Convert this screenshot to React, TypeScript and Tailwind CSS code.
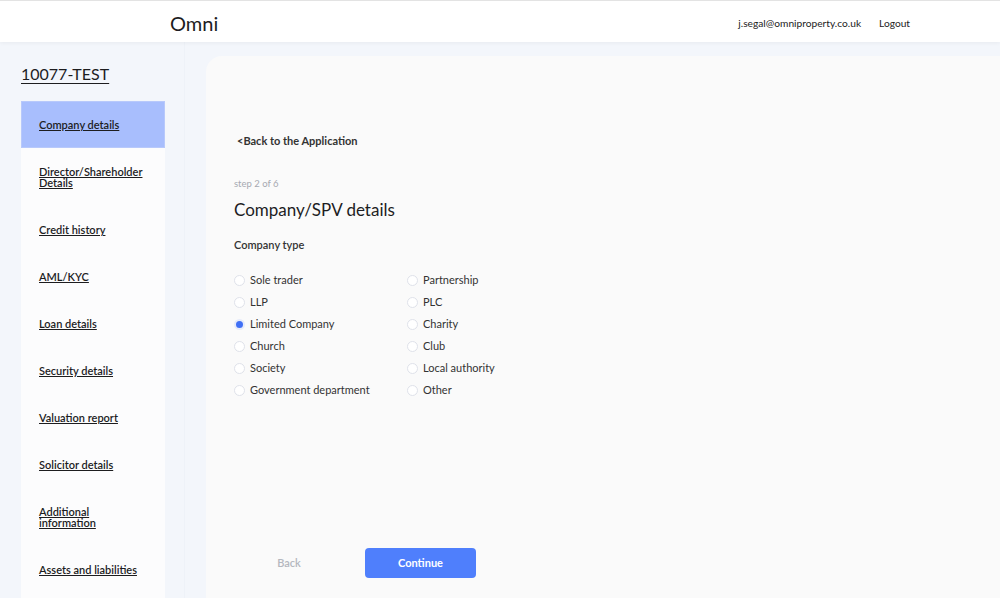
import React from "react"

const navItems = [
  "Company details",
  "Director/Shareholder Details",
  "Credit history",
  "AML/KYC",
  "Loan details",
  "Security details",
  "Valuation report",
  "Solicitor details",
  "Additional information",
  "Assets and liabilities",
]

const leftTypes = ["Sole trader", "LLP", "Limited Company", "Church", "Society", "Government department"]
const rightTypes = ["Partnership", "PLC", "Charity", "Club", "Local authority", "Other"]

function Radio({ label, checked }: { label: string; checked?: boolean }) {
  return (
    <label className="flex items-center h-[22px] gap-[5px] text-[11px] text-[#333]">
      {checked ? (
        <span className="w-[11px] h-[11px] rounded-full border-[2px] border-[#e6ebfa] bg-[#3f6ff5]" />
      ) : (
        <span className="w-[11px] h-[11px] rounded-full border border-[#dfe2ea] bg-white" />
      )}
      <span>{label}</span>
    </label>
  )
}

export default function App() {
  return (
    <div className="w-[1000px] h-[598px] overflow-hidden bg-[#f3f6fb] font-['Lato',sans-serif] text-[#1d1d1f]">
      {/* header */}
      <header className="relative z-10 h-[42px] bg-white border-t border-[#e3e3e3] shadow-[0_1px_4px_rgba(0,0,0,0.05)] flex items-center">
        <div className="pl-[170px] text-[20px] leading-none pt-[3px]">Omni</div>
        <div className="ml-auto pr-[90px] pt-[5px] flex items-center gap-[18px] text-[10.2px] text-[#222]">
          <span>j.segal@omniproperty.co.uk</span>
          <span>Logout</span>
        </div>
      </header>

      <div className="flex h-[556px]">
        {/* sidebar */}
        <aside className="w-[185px] flex flex-col border-r border-[#eef2f8] pl-[21px] pt-[22px]">
          <h1 className="text-[16px] leading-[20px] underline underline-offset-[3px] mb-[17px]">10077-TEST</h1>
          <nav className="w-[144px] flex-1 bg-[#fcfcfd]">
            {navItems.map((item, i) => (
              <div
                key={item}
                className={`py-[18px] pl-[18px] text-[11px] leading-[11px] font-semibold ${
                  i === 0 ? "bg-[#a8befd] shadow-[inset_0_0_0_1px_#b8c9fb]" : ""
                }`}
              >
                <span className="block w-[102px] underline">{item}</span>
              </div>
            ))}
          </nav>
        </aside>

        {/* main card */}
        <main className="flex-1 pl-[21px] pt-[14px]">
          <div className="h-full bg-[#fafafa] rounded-tl-[16px] pl-[28px] pt-[78px]">
            <div className="pl-[3px] text-[11px] font-bold text-[#333] h-[14px] leading-[14px]">&lt;Back to the Application</div>

            <div className="mt-[30px] text-[9.5px] text-[#a6a9b1] leading-[12px]">step 2 of 6</div>
            <h2 className="mt-[10px] text-[17px] leading-[20px]">Company/SPV details</h2>
            <div className="mt-[18px] text-[11px] font-semibold text-[#333] leading-[14px]">Company type</div>

            <div className="mt-[17px] flex">
              <div className="w-[173px]">
                {leftTypes.map((t) => (
                  <Radio key={t} label={t} checked={t === "Limited Company"} />
                ))}
              </div>
              <div>
                {rightTypes.map((t) => (
                  <Radio key={t} label={t} />
                ))}
              </div>
            </div>

            {/* actions */}
            <div className="mt-[147px] flex items-center">
              <button className="w-[110px] h-[30px] text-[11px] font-semibold text-[#b4b7be]">Back</button>
              <button className="ml-[21px] w-[111px] h-[30px] rounded-[4px] bg-[#4f7ffc] text-white text-[11px] font-bold">
                Continue
              </button>
            </div>
          </div>
        </main>
      </div>
    </div>
  )
}
